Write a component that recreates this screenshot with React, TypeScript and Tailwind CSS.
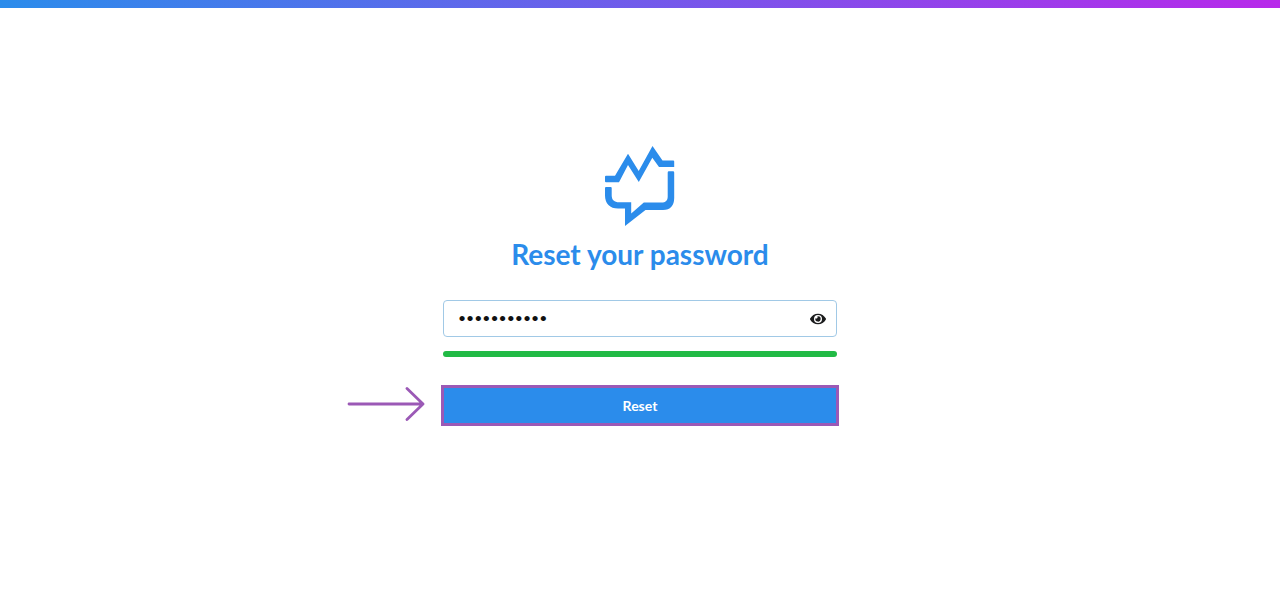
import { useState } from "react";
import { FaEye } from "react-icons/fa";

function Logo() {
  return (
    <svg viewBox="10 6 70 80" className="h-20 w-[70px]" fill="#2b8ceb" aria-hidden="true">
      <path d="M11 35.8H20L33 13.8L43.7 31L57.5 6L67.5 20.6H78.2Q79.2 20.6 79.2 21.6V27H64L57.3 17.8L43.8 42L33 25L24 42.2H11Q10 42.2 10 41.2V36.8Q10 35.8 11 35.8Z" />
      <path d="M11 47H15.7Q16.7 47 16.7 48V55.5C16.7 60 19.5 62.3 24 62.3H36.2V73.4L48.8 62.5H66.5C70.5 62.5 72.7 60.5 72.7 56.5V32.5Q72.7 31.3 73.9 31.3H78Q79.2 31.3 79.2 32.5V58C79.2 65.5 75.5 70 68 70H50.5L30 86V68.6H23C15 68.6 10 63.5 10 55.5V48Q10 47 11 47Z" />
    </svg>
  );
}

function PointerArrow() {
  return (
    <svg
      viewBox="0 0 78 36"
      className="pointer-events-none absolute top-0 right-full mr-[18px] h-9 w-[78px]"
      fill="none"
      stroke="#9b59b6"
      strokeWidth="2.8"
      strokeLinecap="round"
      strokeLinejoin="round"
      aria-hidden="true"
    >
      <path d="M2 17H76M60 1.5L76 17L60 32.5" />
    </svg>
  );
}

export default function App() {
  const [password, setPassword] = useState("Str0ngPass!");
  const [visible, setVisible] = useState(false);

  return (
    <div className="flex min-h-screen flex-col bg-white font-['Lato',sans-serif]">
      <div className="h-2 bg-linear-to-r/srgb from-[#2b8ceb] to-[#b829ea]" />
      <main className="mx-auto flex w-full max-w-[394px] flex-col items-center pt-[138px]">
        <Logo />
        <h1 className="mt-2 text-[28px] leading-10 font-bold text-[#2b8ceb]">Reset your password</h1>
        <form className="mt-[26px] w-full" onSubmit={(event) => event.preventDefault()}>
          <div className="relative">
            <input
              type={visible ? "text" : "password"}
              aria-label="New password"
              value={password}
              onChange={(event) => setPassword(event.target.value)}
              className="block h-[37px] w-full rounded border border-[#a1c9e6] pr-10 pb-0.5 pl-[14px] text-sm text-[#111111] outline-none"
            />
            <button
              type="button"
              aria-label="Show password"
              onClick={() => setVisible(!visible)}
              className="absolute inset-y-0 right-0 flex items-center px-[11px] text-[#1b1c1d]"
            >
              <FaEye className="size-4" />
            </button>
          </div>
          <div
            role="meter"
            aria-label="Password strength"
            aria-valuemin={0}
            aria-valuemax={100}
            aria-valuenow={100}
            className="mt-[14px] h-1.5 w-full rounded-full bg-[#21ba45]"
          />
          <div className="relative mt-[30px]">
            <PointerArrow />
            <button
              type="submit"
              className="block h-[37px] w-full bg-[#2b8ceb] text-sm font-bold text-white outline-3 -outline-offset-1 outline-[#9b59b6]"
            >
              Reset
            </button>
          </div>
        </form>
      </main>
    </div>
  );
}
